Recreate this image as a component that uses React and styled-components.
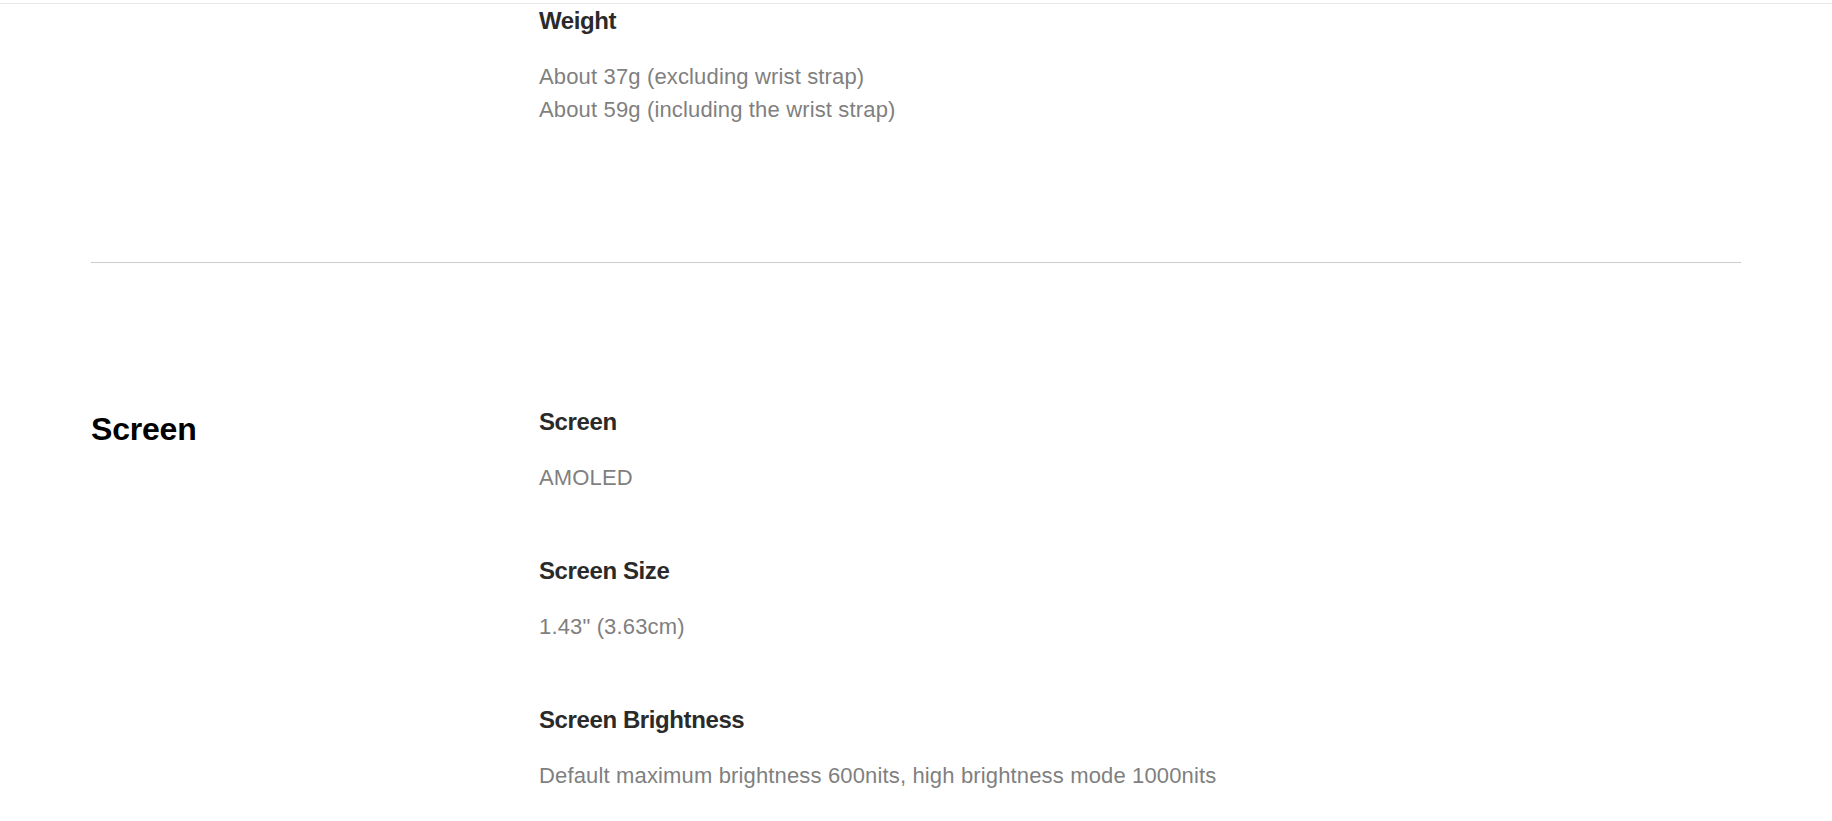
import React from 'react';
import styled, { createGlobalStyle } from 'styled-components';

const GlobalStyle = createGlobalStyle`
  html, body {
    margin: 0;
    padding: 0;
    background: #ffffff;
  }
  body {
    font-family: "Liberation Sans", Arial, sans-serif;
    color: #222222;
  }
`;

const TopBar = styled.div`
  height: 3px;
  border-bottom: 1px solid #e8e8e8;
`;

const Container = styled.main`
  max-width: 1650px;
  margin: 0 auto;
`;

const Section = styled.section`
  display: grid;
  grid-template-columns: 448px 1fr;
  align-items: start;
  padding-top: ${(p) => p.$top}px;
  padding-bottom: ${(p) => p.$bottom}px;
  border-bottom: ${(p) => (p.$divider ? '1px solid #cccccc' : 'none')};
`;

const SectionTitle = styled.h2`
  margin: 0;
  font-size: 32px;
  line-height: 48px;
  font-weight: 700;
  color: #000000;
  letter-spacing: -0.2px;
`;

const SpecList = styled.div`
  display: flex;
  flex-direction: column;
  gap: 60px;
`;

const Spec = styled.div`
  display: flex;
  flex-direction: column;
  gap: 22px;
`;

const SpecLabel = styled.h3`
  margin: 0;
  font-size: 24px;
  line-height: 34px;
  font-weight: 700;
  color: #2a2a2a;
  letter-spacing: -0.4px;
`;

const SpecValue = styled.div`
  font-size: 22px;
  line-height: 33px;
  color: #7f7f7f;
  letter-spacing: 0.15px;
`;

const sections = [
  {
    title: '',
    top: 0,
    bottom: 136,
    divider: true,
    specs: [
      {
        label: 'Weight',
        values: ['About 37g (excluding wrist strap)', 'About 59g (including the wrist strap)'],
      },
    ],
  },
  {
    title: 'Screen',
    top: 142,
    bottom: 20,
    divider: false,
    specs: [
      { label: 'Screen', values: ['AMOLED'] },
      { label: 'Screen Size', values: ['1.43" (3.63cm)'] },
      {
        label: 'Screen Brightness',
        values: ['Default maximum brightness 600nits, high brightness mode 1000nits'],
      },
    ],
  },
];

export default function App() {
  return (
    <>
      <GlobalStyle />
      <TopBar />
      <Container>
        {sections.map((s, i) => (
          <Section key={i} $top={s.top} $bottom={s.bottom} $divider={s.divider}>
            <div>{s.title && <SectionTitle>{s.title}</SectionTitle>}</div>
            <SpecList>
              {s.specs.map((spec) => (
                <Spec key={spec.label}>
                  <SpecLabel>{spec.label}</SpecLabel>
                  <SpecValue>
                    {spec.values.map((v) => (
                      <div key={v}>{v}</div>
                    ))}
                  </SpecValue>
                </Spec>
              ))}
            </SpecList>
          </Section>
        ))}
      </Container>
    </>
  );
}
